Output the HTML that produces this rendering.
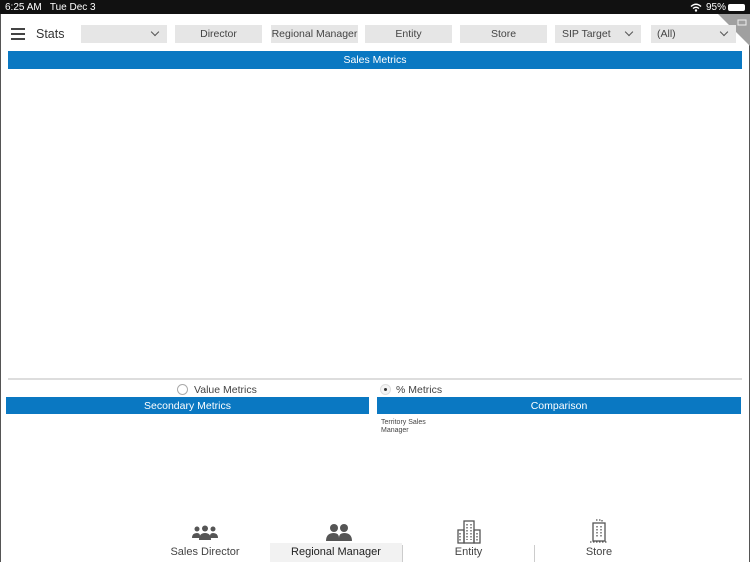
<!DOCTYPE html><html><head><style>
*{margin:0;padding:0;box-sizing:border-box}
body{width:750px;height:562px;position:relative;overflow:hidden;background:#fff;font-family:"Liberation Sans",sans-serif;color:#333}
.a{position:absolute}
.sb{left:0;top:0;width:750px;height:14px;background:#111;color:#fff;font-size:10px;line-height:15px}
.btn{position:absolute;top:25px;height:18px;background:#e6e6e6;font-size:10.5px;line-height:19px;text-align:center;color:#444}
.chev{position:absolute;right:9px;top:4px;width:6px;height:6px;border-right:1px solid #555;border-bottom:1px solid #555;transform:rotate(45deg)}
.blue{position:absolute;background:#0a78c2;color:#fff;font-size:10.5px;text-align:center;line-height:18px}
.lbl{font-size:10.5px;color:#444}
.nav{position:absolute;top:546px;font-size:11px;color:#444;text-align:center}
</style></head><body>
<div class="a sb"><span style="position:absolute;left:5px">6:25 AM&nbsp;&nbsp; Tue Dec 3</span><span style="position:absolute;left:706px">95%</span><div class="a" style="left:728px;top:4px;width:17px;height:7px;border:1px solid #fff;background:#fff;border-radius:2px"></div>
<svg class="a" style="left:690px;top:3px" width="12" height="9" viewBox="0 0 12 9"><path d="M1 3.5Q6 -1 11 3.5M3 5.5Q6 3 9 5.5" stroke="#fff" stroke-width="1.4" fill="none"/><circle cx="6" cy="7.5" r="1.2" fill="#fff"/></svg></div>
<div class="a" style="left:0;top:14px;width:1px;height:548px;background:#555"></div>
<div class="a" style="left:749px;top:14px;width:1px;height:548px;background:#555"></div>
<svg class="a" style="left:718px;top:14px" width="32" height="32"><path d="M0 0H32V32Z" fill="#a0a0a0"/><rect x="20" y="6" width="8" height="5" fill="none" stroke="#eee"/></svg>
<div class="a" style="left:11px;top:28px;width:14px;height:2px;background:#444;box-shadow:0 5px #444,0 10px #444"></div>
<div class="a" style="left:36px;top:27px;font-size:12.5px;color:#333">Stats</div>
<div class="btn" style="left:81px;width:86px"><div class="chev"></div></div>
<div class="btn" style="left:175px;width:87px">Director</div>
<div class="btn" style="left:271px;width:87px">Regional Manager</div>
<div class="btn" style="left:365px;width:87px">Entity</div>
<div class="btn" style="left:460px;width:87px">Store</div>
<div class="btn" style="left:555px;width:86px;text-align:left;padding-left:7px">SIP Target<div class="chev"></div></div>
<div class="btn" style="left:651px;width:85px;text-align:left;padding-left:6px">(All)<div class="chev"></div></div>
<div class="blue" style="left:8px;top:51px;width:734px;height:18px">Sales Metrics</div>
<div class="a" style="left:8px;top:378px;width:734px;height:2px;background:#ddd"></div>
<div class="a" style="left:177px;top:384px;width:11px;height:11px;border:1px solid #aaa;border-radius:50%"></div>
<div class="a lbl" style="left:194px;top:384px">Value Metrics</div>
<div class="a" style="left:380px;top:384px;width:11px;height:11px;border:1px solid #ddd;border-radius:50%;background:#f4f4f4"><div class="a" style="left:3px;top:3px;width:3px;height:3px;background:#333;border-radius:50%"></div></div>
<div class="a lbl" style="left:396px;top:384px">% Metrics</div>
<div class="blue" style="left:6px;top:397px;width:363px;height:17px">Secondary Metrics</div>
<div class="blue" style="left:377px;top:397px;width:364px;height:17px">Comparison</div>
<div class="a" style="left:381px;top:419px;font-size:7px;line-height:8px;color:#444">Territory Sales<br>Manager</div>
<div class="a" style="left:270px;top:543px;width:132px;height:19px;background:#f2f2f2"></div>
<div class="a" style="left:402px;top:545px;width:1px;height:17px;background:#ccc"></div>
<div class="a" style="left:534px;top:545px;width:1px;height:17px;background:#ccc"></div>
<svg class="a" style="left:192px;top:525px" width="26" height="16" viewBox="0 0 26 16" fill="#555"><circle cx="5" cy="4" r="2.5"/><circle cx="13" cy="3.5" r="3"/><circle cx="21" cy="4" r="2.5"/><path d="M0 13Q0 8 5 8Q8 8 8 11V13ZM7 15Q7 8 13 8Q19 8 19 15ZM18 11Q18 8 21 8Q26 8 26 13H18Z"/></svg>
<svg class="a" style="left:326px;top:523px" width="26" height="18" viewBox="0 0 26 18" fill="#555"><circle cx="8" cy="5" r="4"/><circle cx="18" cy="5" r="4"/><path d="M0 18Q0 10 8 10Q13 10 13 15V18ZM13 18V15Q13 10 18 10Q26 10 26 18Z"/></svg>
<svg class="a" style="left:457px;top:520px" width="24" height="24" viewBox="0 0 24 24" fill="none" stroke="#555" stroke-width="1.3"><rect x="7" y="1" width="10" height="22"/><rect x="1" y="10" width="6" height="13"/><rect x="17" y="10" width="6" height="13"/><path d="M10 4v16M14 4v16M3 13v8M20 13v8" stroke-dasharray="1.5 1.5"/></svg>
<svg class="a" style="left:589px;top:519px" width="20" height="24" viewBox="0 0 20 24" fill="none" stroke="#555" stroke-width="1.3"><rect x="4" y="4" width="12" height="18"/><path d="M7 1h6v3M1 23h18M8 7v12M12 7v12" stroke-dasharray="1.5 1.5"/></svg>
<div class="nav" style="left:150px;width:110px">Sales Director</div>
<div class="nav" style="left:270px;width:132px;color:#222">Regional Manager</div>
<div class="nav" style="left:403px;width:131px">Entity</div>
<div class="nav" style="left:535px;width:128px">Store</div>
</body></html>
